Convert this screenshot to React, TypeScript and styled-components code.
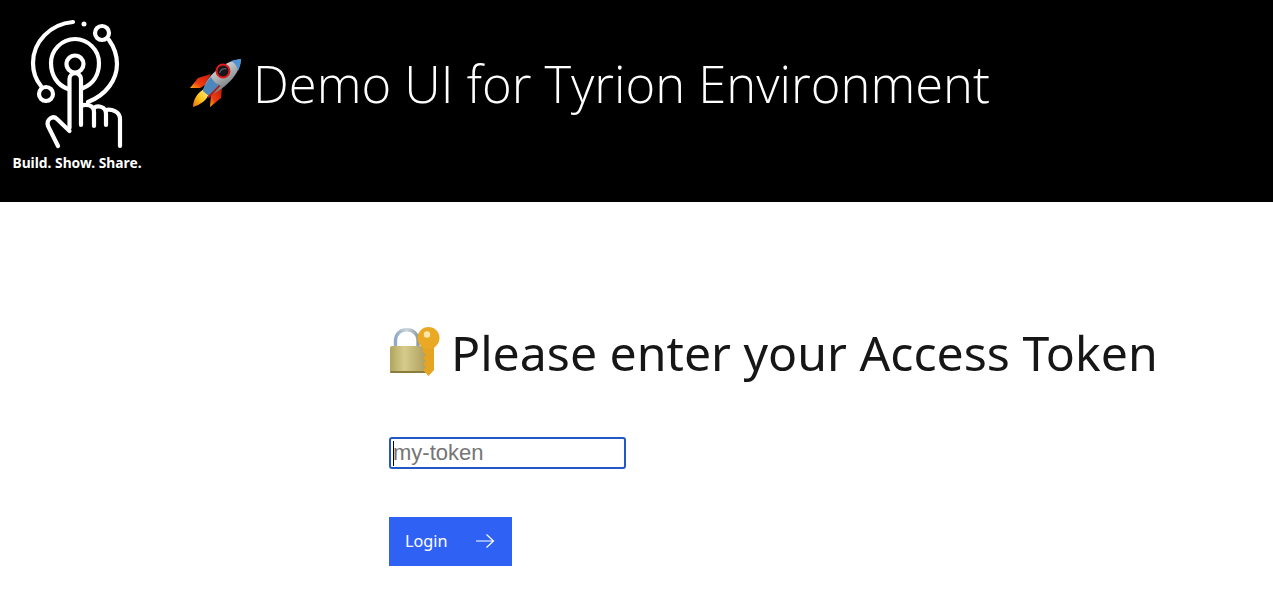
import styled, {createGlobalStyle} from 'styled-components';

const GlobalStyle = createGlobalStyle`
  html, body {
    margin: 0;
    padding: 0;
    background-color: #fff;
    font-family: "Noto Sans", "Open Sans", sans-serif;
  }
`;

const Header = styled.header`
  height: 202px;
  background-color: #000;
  display: flex;
  align-items: flex-start;
`;

const LogoWrapper = styled.div`
  width: 154px;
  flex-shrink: 0;
  display: flex;
  flex-direction: column;
  align-items: center;
`;

const LogoMark = styled.svg`
  display: block;
  width: 154px;
  height: 152px;
`;

const Tagline = styled.div`
  margin-top: 2px;
  color: #fff;
  font-size: 13.8px;
  line-height: 18px;
  font-weight: 700;
  white-space: nowrap;
`;

const HeaderTitle = styled.h1`
  margin: 54px 0 0 34px;
  display: flex;
  align-items: center;
  gap: 10px;
  color: #fff;
  font-size: 50.7px;
  line-height: 60px;
  font-weight: 300;
  font-family: "Open Sans", sans-serif;
  white-space: nowrap;
`;

const Main = styled.main`
  padding: 117px 0 0 389px;
  display: flex;
  flex-direction: column;
  align-items: flex-start;
`;

const PageTitle = styled.h2`
  margin: 0;
  display: flex;
  align-items: center;
  gap: 10px;
  color: #161616;
  font-size: 48.2px;
  line-height: 66px;
  font-weight: 400;
  white-space: nowrap;
`;

const InputWrapper = styled.div`
  position: relative;
  margin-top: 52px;
`;

const TokenInput = styled.input`
  box-sizing: border-box;
  display: block;
  width: 237px;
  height: 32px;
  padding: 0 2px;
  border: 2px solid #2259c4;
  border-radius: 3px;
  outline: none;
  background: #fff;
  font-family: "Liberation Sans", Arial, sans-serif;
  font-size: 22px;
  color: #111;

  &::placeholder {
    color: #757575;
    opacity: 1;
  }
`;

const Caret = styled.span`
  position: absolute;
  left: 4px;
  top: 4px;
  width: 1px;
  height: 25px;
  background-color: #000;
`;

const LoginButton = styled.button`
  box-sizing: border-box;
  width: 123px;
  height: 49px;
  margin-top: 48px;
  padding: 0 17px 2px 16px;
  border: none;
  border-radius: 0;
  background-color: #2f62f4;
  color: #fff;
  display: flex;
  align-items: center;
  justify-content: space-between;
  font-family: inherit;
  font-size: 16.2px;
`;

const ArrowIcon = styled.svg`
  width: 20px;
  height: 20px;
  flex-shrink: 0;
  margin-top: 1px;
`;

const Rocket = () => (
  <svg width="55" height="52" viewBox="0 0 55 52" aria-hidden="true">
    <defs>
      <linearGradient id="hull" x1="0.2" y1="0" x2="0.8" y2="1">
        <stop offset="0" stopColor="#f2f3f2" />
        <stop offset="0.45" stopColor="#aeb4b6" />
        <stop offset="1" stopColor="#4f5559" />
      </linearGradient>
      <linearGradient id="fin" x1="1" y1="0" x2="0" y2="1">
        <stop offset="0" stopColor="#c8160c" />
        <stop offset="0.65" stopColor="#ee3c10" />
        <stop offset="1" stopColor="#fbb40f" />
      </linearGradient>
      <linearGradient id="flame" x1="1" y1="0" x2="0" y2="1">
        <stop offset="0" stopColor="#fff2a0" />
        <stop offset="0.55" stopColor="#fcc419" />
        <stop offset="1" stopColor="#ee6a0c" />
      </linearGradient>
    </defs>
    <path d="M2 30 L10 20 L23 16 L17 27 L12 30 Z" fill="url(#fin)" />
    <path d="M22 49 L23 37 L34 29 L33 40 Z" fill="url(#fin)" />
    <path d="M5 49 C5 42 9 34 18 30 L21 36 C19 42 12 47 5 49 Z" fill="url(#flame)" />
    <path d="M15 33 C18 19 33 4 53 1 C52 15 40 29 21 38 Z" fill="url(#hull)" />
    <path d="M15 33 C16 28 19 23 23 19 C25 23 28 26 32 27 C28 31 25 34 21 38 Z" fill="#4d86bd" />
    <path d="M43 3 C46 2 50 1 53 1 C53 5 52 9 50 13 C49 8 47 5 43 3 Z" fill="#4f93d4" />
    <path d="M19 39 L31 27 L32.5 28 L21 40 Z" fill="#a8231a" />
    <circle cx="35" cy="13" r="6.5" fill="#15151b" stroke="#e01b1b" strokeWidth="2" />
    <path d="M31.5 15 C33 11 36 10 38.5 11" fill="none" stroke="#5a5b66" strokeWidth="1.2" />
  </svg>
);

const LockWithKey = () => (
  <svg width="52" height="50" viewBox="0 0 52 50" aria-hidden="true">
    <defs>
      <linearGradient id="brass" x1="0" y1="0" x2="1" y2="0">
        <stop offset="0" stopColor="#b0a55f" />
        <stop offset="0.4" stopColor="#d6cb8a" />
        <stop offset="1" stopColor="#ad9f5f" />
      </linearGradient>
      <linearGradient id="shackle" x1="0" y1="0" x2="1" y2="0">
        <stop offset="0" stopColor="#8fa9c4" />
        <stop offset="0.5" stopColor="#ccd6dd" />
        <stop offset="1" stopColor="#8d99a3" />
      </linearGradient>
    </defs>
    <path d="M6.5 20 V14 C6.5 -1 29 -1 29 14 V20" fill="none" stroke="url(#shackle)" strokeWidth="3.4" />
    <rect x="1" y="19" width="36" height="27" rx="2" fill="url(#brass)" />
    <rect x="1" y="44" width="36" height="2" rx="1" fill="#8b7c3e" />
    <path d="M33 16 H45 V43 L39.5 49 L34 43 L37 40 L34 37 L37 34 L34 31 L37 28 L34 25 Z" fill="#e5a522" />
    <circle cx="39.5" cy="11" r="11" fill="#eaa925" />
    <circle cx="38" cy="7.5" r="3.2" fill="#fbe6a8" />
  </svg>
);

export default function App() {
  return (
    <>
      <GlobalStyle />
      <Header>
        <LogoWrapper>
          <LogoMark viewBox="0 0 154 152" fill="none" stroke="#fff" strokeWidth="4.2" strokeLinecap="round" aria-hidden="true">
            <path d="M73 22 C50 24 33 42 33 63 C33 71 36 80 41 86" />
            <circle cx="46" cy="94" r="7" />
            <circle cx="102" cy="33" r="7" />
            <path d="M109 40 C114 47 117 55 117 64 C117 80 106 95 88 102" />
            <circle cx="84" cy="24" r="1.5" fill="#fff" strokeWidth="2" />
            <path d="M68 89 C57 85 51 75 51 63 C51 50 62 39 75 39 C88 39 99 50 99 63 C99 75 93 84 83 88" />
            <circle cx="75" cy="64" r="8.5" />
            <path d="M69.5 128 V79 A5.7 5.7 0 0 1 81 79 V125" />
            <path d="M81 106 C85 104 94 104 94 112 V126" />
            <path d="M94 108 C97 105 106 106 106 114 V125" />
            <path d="M106 110 C111 109 120 111 120 119 V146" />
            <path d="M58 146 L48 126 C46 119 53 115 57 119 L69.5 131" />
          </LogoMark>
          <Tagline>Build. Show. Share.</Tagline>
        </LogoWrapper>
        <HeaderTitle>
          <Rocket />
          Demo UI for Tyrion Environment
        </HeaderTitle>
      </Header>
      <Main>
        <PageTitle>
          <LockWithKey />
          Please enter your Access Token
        </PageTitle>
        <InputWrapper>
          <TokenInput placeholder="my-token" />
          <Caret />
        </InputWrapper>
        <LoginButton type="button">
          Login
          <ArrowIcon viewBox="0 0 20 20" fill="none" stroke="#fff" strokeWidth="1.2" aria-hidden="true">
            <path d="M1 10 H18.5 M11.5 3.5 L18.5 10 L11.5 16.5" />
          </ArrowIcon>
        </LoginButton>
      </Main>
    </>
  );
}
